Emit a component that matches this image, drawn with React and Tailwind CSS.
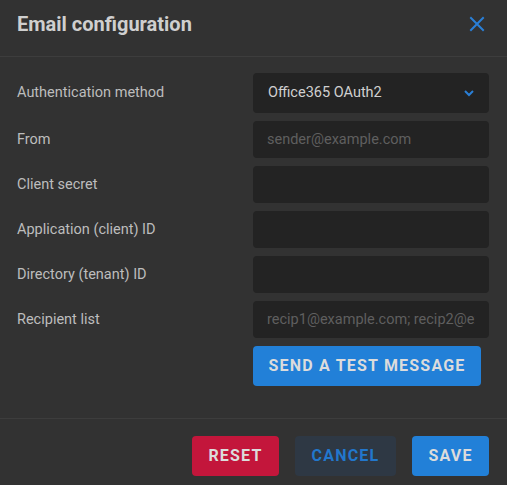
import React from 'react';

const fields = [
  { label: 'From', placeholder: 'sender@example.com' },
  { label: 'Client secret', placeholder: '' },
  { label: 'Application (client) ID', placeholder: '' },
  { label: 'Directory (tenant) ID', placeholder: '' },
  { label: 'Recipient list', placeholder: 'recip1@example.com; recip2@example.com' },
];

const App = () => {
  return (
    <div className="w-[507px] h-[485px] bg-[#323232] flex flex-col overflow-hidden" style={{ fontFamily: 'Roboto, "Liberation Sans", sans-serif' }}>
      {/* Header */}
      <div className="h-[57px] pb-[9px] flex items-center justify-between pl-[17px] pr-[22px] border-b border-[#3d3d3d]">
        <h2 className="text-[20px] font-bold text-[#cfcfcf]">Email configuration</h2>
        <button className="text-[#2a7fd6]">
          <svg width="16" height="16" viewBox="0 0 16 16" fill="none" stroke="currentColor" strokeWidth="2" strokeLinecap="square">
            <path d="M2 2L14 14M14 2L2 14" />
          </svg>
        </button>
      </div>

      {/* Body */}
      <div className="flex flex-col gap-2 pt-4 pb-8 pl-[17px] pr-[18px] border-b border-[#3d3d3d]">
        <div className="flex items-center">
          <span className="w-[236px] text-[14.5px] text-[#bdbdbd]">Authentication method</span>
          <div className="w-[236px] h-10 rounded bg-[#232323] flex items-center justify-between pl-[15px] pr-[14px]">
            <span className="text-[14.5px] text-[#d0d0d0]">Office365 OAuth2</span>
            <svg width="12" height="8" viewBox="0 0 12 8" fill="none" stroke="#2a7fd6" strokeWidth="2">
              <path d="M2 2L6 6L10 2" />
            </svg>
          </div>
        </div>
        {fields.map((f) => (
          <div key={f.label} className="flex items-center">
            <span className="w-[236px] text-[14.5px] text-[#bdbdbd]">{f.label}</span>
            <input
              className="w-[236px] h-[37px] rounded bg-[#232323] px-[14px] text-[14.5px] text-[#d0d0d0] placeholder:text-[#5f5f5f] outline-none"
              placeholder={f.placeholder}
            />
          </div>
        ))}
        <div className="flex">
          <div className="w-[236px]" />
          <button className="w-[228px] h-10 rounded bg-[#2280d8] text-[16px] font-bold tracking-[1.2px] text-[#dcdcdc]">
            SEND A TEST MESSAGE
          </button>
        </div>
      </div>

      {/* Footer */}
      <div className="flex justify-end gap-4 pt-[17px] pr-[18px]">
        <button className="w-[87px] h-10 rounded bg-[#c3163b] text-[16px] font-bold tracking-[1.2px] text-[#dcdcdc]">RESET</button>
        <button className="w-[101px] h-10 rounded bg-[#2e3844] text-[16px] font-bold tracking-[1.2px] text-[#2277cc]">CANCEL</button>
        <button className="w-[77px] h-10 rounded bg-[#2280d8] text-[16px] font-bold tracking-[1.2px] text-[#dcdcdc]">SAVE</button>
      </div>
    </div>
  );
};

export default App;
